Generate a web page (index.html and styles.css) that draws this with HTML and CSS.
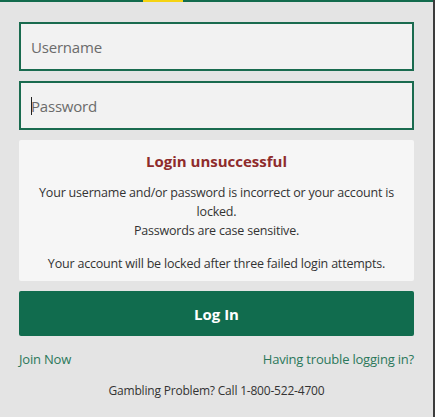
FILE: index.html
```html
<!DOCTYPE html>
<html lang="en">
  <head>
    <meta charset="UTF-8" />
    <meta name="viewport" content="width=device-width, initial-scale=1" />
    <title>Log In</title>
    <link rel="stylesheet" href="styles.css">
  </head>
  <body>
    <div class="topBar"><span class="topBarMark"></span></div>
    <div class="loginPanel">
      <form class="loginForm">
        <input class="field" type="text" placeholder="Username" />
        <div class="fieldWrap">
          <input class="field" type="password" placeholder="Password" />
          <span class="caret"></span>
        </div>

        <div class="errorBox">
          <h2 class="errorTitle">Login unsuccessful</h2>
          <p>
            Your username and/or password is incorrect or your account is
            locked.<br />Passwords are case sensitive.
          </p>
          <p>Your account will be locked after three failed login attempts.</p>
        </div>

        <button class="loginBtn" type="button">Log In</button>
      </form>

      <div class="helpLinks">
        <a href="#">Join Now</a>
        <a href="#">Having trouble logging in?</a>
      </div>

      <p class="gambling">Gambling Problem? Call 1-800-522-4700</p>
    </div>
  </body>
</html>
```

FILE: styles.css
```css
html,
body {
  margin: 0;
  padding: 0;
  height: 100%;
}

body {
  font-family: "Open Sans", "Noto Sans", sans-serif;
  background: #e4e4e4;
  border-right: 2px solid #3c3c3c;
  box-sizing: border-box;
  color: #333;
}

.topBar {
  height: 2px;
  background: #136b4d;
  padding-left: 143px;
}

.topBarMark {
  display: block;
  width: 40px;
  height: 2px;
  background: #f5d312;
}

.loginPanel {
  padding: 20px 19px 0 19px;
}

.loginForm {
  display: flex;
  flex-direction: column;
  gap: 10px;
  margin: 0;
}

.fieldWrap {
  position: relative;
}

.field {
  display: block;
  width: 100%;
  height: 49px;
  box-sizing: border-box;
  border: 2px solid #1a6b4f;
  background: #f2f2f2;
  padding: 0 10px;
  font-family: "Open Sans", "Noto Sans", sans-serif;
  font-size: 15px;
  letter-spacing: -0.2px;
  color: #333;
  outline: none;
}

.field::placeholder {
  color: #6b6b6b;
}

.caret {
  position: absolute;
  left: 12px;
  top: 16px;
  width: 1px;
  height: 18px;
  background: #222;
}

.errorBox {
  background: #f6f6f6;
  border-radius: 2px;
  padding: 10px 12px 8px;
  text-align: center;
  font-size: 12.5px;
  letter-spacing: -0.2px;
  line-height: 19px;
  color: #333;
}

.errorTitle {
  margin: 0 0 11px;
  font-size: 15px;
  font-weight: 700;
  letter-spacing: 0;
  color: #8e2b2b;
  line-height: 22px;
}

.errorBox p {
  margin: 0 0 14px;
}

.errorBox p:last-child {
  margin-bottom: 0;
}

.loginBtn {
  height: 45px;
  border: none;
  border-radius: 2px;
  background: #116c4e;
  color: #fff;
  font-family: "Open Sans", "Noto Sans", sans-serif;
  font-size: 15px;
  font-weight: 700;
  cursor: pointer;
}

.helpLinks {
  display: flex;
  justify-content: space-between;
  margin-top: 14px;
  font-size: 13px;
  letter-spacing: -0.2px;
}

.helpLinks a {
  color: #2b785b;
  text-decoration: none;
}

.gambling {
  margin: 14px 0 0;
  text-align: center;
  font-size: 12px;
  letter-spacing: -0.2px;
  color: #333;
}
```
